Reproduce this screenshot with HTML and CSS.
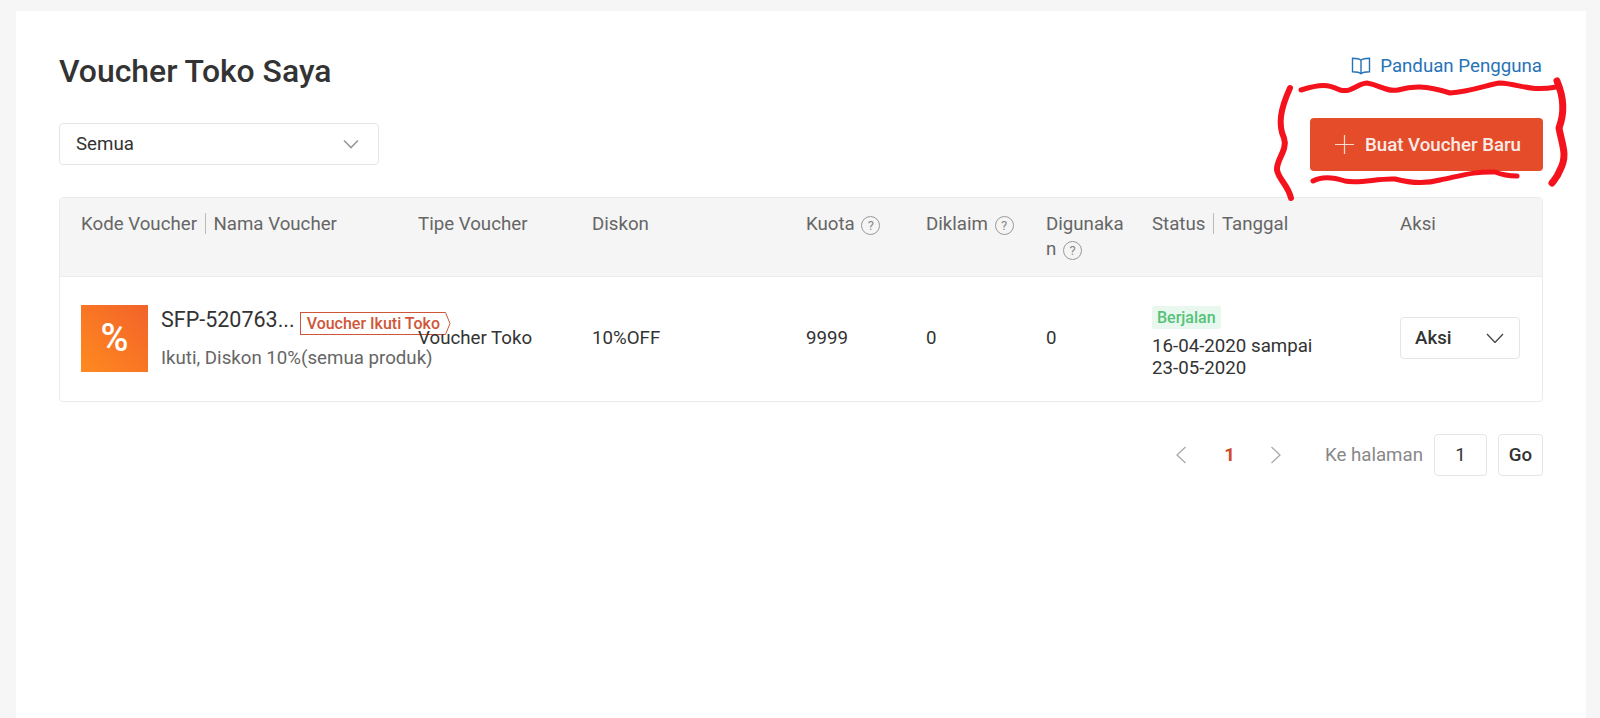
FILE: index.html
```html
<!DOCTYPE html>
<html lang="id">
<head>
<meta charset="utf-8">
<title>Voucher Toko Saya</title>
<link rel="stylesheet" href="styles.css">
</head>
<body>
<main class="card">
  <div class="top">
    <div class="top-left">
      <h1 class="title">Voucher Toko Saya</h1>
      <div class="select">
        <span>Semua</span>
        <svg class="chev" viewBox="0 0 16 10"><path d="M1 1.5l7 7 7-7" fill="none" stroke="#999" stroke-width="1.6"/></svg>
      </div>
    </div>
    <div class="top-right">
      <a class="guide">
        <svg class="book" viewBox="0 0 20 20"><path d="M10 4.2C8.6 2.9 6.6 2.2 1.5 2.2v13.6c5 0 7.100.7 8.500 2 1.400-1.300 3.500-2 8.500-2V2.200c-5.100 0-7.100.7-8.500 2zM10 4.200v13.600" fill="none" stroke="#2673b8" stroke-width="1.400"/></svg>
        Panduan Pengguna
      </a>
      <button class="create">
        <svg class="plus" viewBox="0 0 20 20"><path d="M10 0v20M0 10h20" stroke="#f8d9cf" stroke-width="1.300"/></svg>
        Buat Voucher Baru
      </button>
    </div>
  </div>

  <div class="table">
    <div class="row head">
      <div class="cell"><span>Kode Voucher</span><i class="sep"></i><span>Nama Voucher</span></div>
      <div class="cell">Tipe Voucher</div>
      <div class="cell">Diskon</div>
      <div class="cell">Kuota <b class="q">?</b></div>
      <div class="cell">Diklaim <b class="q">?</b></div>
      <div class="cell breakword">Digunakan <b class="q">?</b></div>
      <div class="cell"><span>Status</span><i class="sep"></i><span>Tanggal</span></div>
      <div class="cell">Aksi</div>
    </div>
    <div class="row body">
      <div class="cell voucher">
        <div class="thumb">%</div>
        <div class="info">
          <div class="code-line">
            <span class="code">SFP-520763...</span>
            <span class="tag">Voucher Ikuti Toko<svg class="tag-tip" viewBox="0 0 8 23"><path d="M0 .5h2.500L7 11.500l-4.500 11H0" fill="#fff" stroke="#d0563a"/></svg></span>
          </div>
          <div class="desc">Ikuti, Diskon 10%(semua produk)</div>
        </div>
      </div>
      <div class="cell plain">Voucher Toko</div>
      <div class="cell plain">10%OFF</div>
      <div class="cell plain">9999</div>
      <div class="cell plain">0</div>
      <div class="cell plain">0</div>
      <div class="cell status">
        <span class="badge">Berjalan</span>
        <span>16-04-2020 sampai<br>23-05-2020</span>
      </div>
      <div class="cell plain">
        <div class="action">
          <span>Aksi</span>
          <svg class="chev wide" viewBox="0 0 18 10"><path d="M1 1l8 8.500L17 1" fill="none" stroke="#444" stroke-width="1.300"/></svg>
        </div>
      </div>
    </div>
  </div>

  <nav class="pager">
    <svg class="arrow" viewBox="0 0 12 18"><path d="M10.500 1L2 9l8.500 8" fill="none" stroke="#aaa" stroke-width="1.300"/></svg>
    <span class="page">1</span>
    <svg class="arrow" viewBox="0 0 12 18"><path d="M1.500 1L10 9l-8.500 8" fill="none" stroke="#aaa" stroke-width="1.300"/></svg>
    <span class="goto">Ke halaman</span>
    <span class="box num">1</span>
    <span class="box go">Go</span>
  </nav>
</main>
<svg class="scribble" viewBox="0 0 1600 718" aria-hidden="true">
  <g fill="none" stroke="#f4121c" stroke-linecap="round" stroke-linejoin="round">
    <path stroke-width="6" d="M1290 88C1280 110 1278 125 1284 138C1288 150 1276 160 1277 170C1279 180 1288 185 1291 198"/>
    <path stroke-width="5" d="M1301 90C1320 84 1328 84 1340 90C1352 93 1356 84 1367 83C1380 85 1385 92 1398 90C1412 86 1425 85 1450 93C1470 92 1490 84 1500 83C1520 84 1530 92 1556 87"/>
    <path stroke-width="7" d="M1557 81C1565 100 1564 115 1559 128C1562 145 1568 155 1560 170C1557 178 1554 180 1552 183"/>
    <path stroke-width="5" d="M1313 181C1320 177 1330 176 1345 181C1360 184 1378 178 1395 179C1410 183 1425 184 1440 180C1460 176 1475 171 1495 172C1505 176 1512 176 1517 176"/>
  </g>
</svg>
</body>
</html>
```
FILE: styles.css
```css
* { box-sizing: border-box; }
html, body { margin: 0; height: 718px; overflow: hidden; }
body {
  background: #f6f6f6;
  font-family: Roboto, "Liberation Sans", sans-serif;
  font-size: 18.7px;
  color: #333;
  padding: 11px 14px 0 16px;
  position: relative;
}
.card {
  background: #fff;
  height: 707px;
  padding: 38px 43px 0 43px;
}
.top { display: flex; justify-content: space-between; height: 148px; }
.top-left { display: flex; flex-direction: column; }
.title { margin: 0; font-size: 31.900px; font-weight: 500; line-height: 44px; height: 74px; color: #333; }
.select {
  width: 320px; height: 42px;
  border: 1px solid #e5e5e5; border-radius: 4px;
  display: flex; align-items: center; justify-content: space-between;
  padding: 0 19px 0 16px;
  color: #333;
}
.chev { width: 16px; height: 10px; }
.chev.wide { width: 18px; }
.top-right { display: flex; flex-direction: column; align-items: flex-end; }
.guide { display: flex; align-items: center; gap: 9px; color: #2673b8; height: 34px; margin-right: 1px; }
.book { width: 20px; height: 20px; }
.create {
  margin-top: 35px;
  width: 233px; height: 53px;
  padding: 0 0 0 3px;
  background: #e54c2a; border: 0; border-radius: 4px;
  color: #f9ece8; font: 500 18.7px Roboto, sans-serif;
  display: flex; align-items: center; justify-content: center; gap: 11px;
}
.plus { width: 19px; height: 19px; }
.table { border: 1px solid #ebebeb; border-radius: 4px; width: 1484px; }
.row { display: grid; grid-template-columns: 358px 174px 214px 120px 120px 106px 248px 1fr; }
.head { background: #f5f5f5; height: 79px; border-bottom: 1px solid #ebebeb; color: #666; line-height: 25px; }
.head .cell { padding-top: 14px; }
.head .cell:first-child, .body .cell:first-child { padding-left: 21px; }
.breakword { width: 84px; word-break: break-all; }
.sep { display: inline-block; width: 1px; height: 21px; background: #bbb; margin: 0 7.500px 0 8px; vertical-align: -4px; }
.q {
  display: inline-flex; width: 19px; height: 19px;
  margin-left: 2px;
  align-items: center; justify-content: center;
  border: 1px solid #999; border-radius: 50%;
  font-size: 13px; font-weight: 400; color: #888;
  vertical-align: 0;
}
.body { height: 124px; align-items: center; }
.plain { position: relative; top: -1px; }
.voucher { display: flex; align-items: center; gap: 13px; position: relative; top: -1px; }
.thumb {
  width: 67px; height: 67px; flex: none;
  background: linear-gradient(45deg, #ff8a1f, #f2622a);
  color: #fff; font-size: 38px; font-weight: 500;
  display: flex; align-items: center; justify-content: center;
}
.info { white-space: nowrap; margin-top: -3px; }
.code-line { display: flex; align-items: center; height: 30px; }
.code { font-size: 21.500px; font-weight: 400; color: #333; }
.tag {
  position: relative;
  margin: 8px 0 0 5px;
  border: 1px solid #d0563a; border-right: 0;
  color: #d0563a; font-size: 16px; font-weight: 500;
  height: 23px; line-height: 21px; padding: 0 4px 0 6px;
}
.tag-tip { position: absolute; right: -7px; top: -1px; width: 8px; height: 23px; }
.desc { margin-top: 13px; color: #666; line-height: 22px; }
.status { display: flex; flex-direction: column; align-items: flex-start; line-height: 22px; padding-top: 6px; }
.badge {
  background: #e8f8ee; color: #55c278; font-size: 16px; font-weight: 500;
  padding: 0 5px; height: 23px; line-height: 23px; border-radius: 2px; margin-bottom: 6px;
}
.action {
  width: 120px; height: 42px;
  border: 1px solid #e5e5e5; border-radius: 4px;
  display: flex; align-items: center; justify-content: space-between;
  padding: 0 15px 0 14px;
  font-weight: 500; color: #333;
}
.pager { display: flex; align-items: center; justify-content: flex-end; width: 1484px; margin-top: 32px; height: 42px; }
.arrow { width: 12px; height: 18px; }
.page { color: #d0492a; font-weight: 700; margin: 0 35px 0 37px; }
.goto { color: #888; margin: 0 11px 0 43px; }
.box {
  height: 42px; border: 1px solid #e5e5e5; border-radius: 4px;
  display: flex; align-items: center; justify-content: center;
}
.num { width: 53px; font-weight: 400; }
.go { width: 45px; margin-left: 11px; font-weight: 500; color: #333; }
.scribble { position: absolute; left: 0; top: 0; width: 1600px; height: 718px; pointer-events: none; }
```
